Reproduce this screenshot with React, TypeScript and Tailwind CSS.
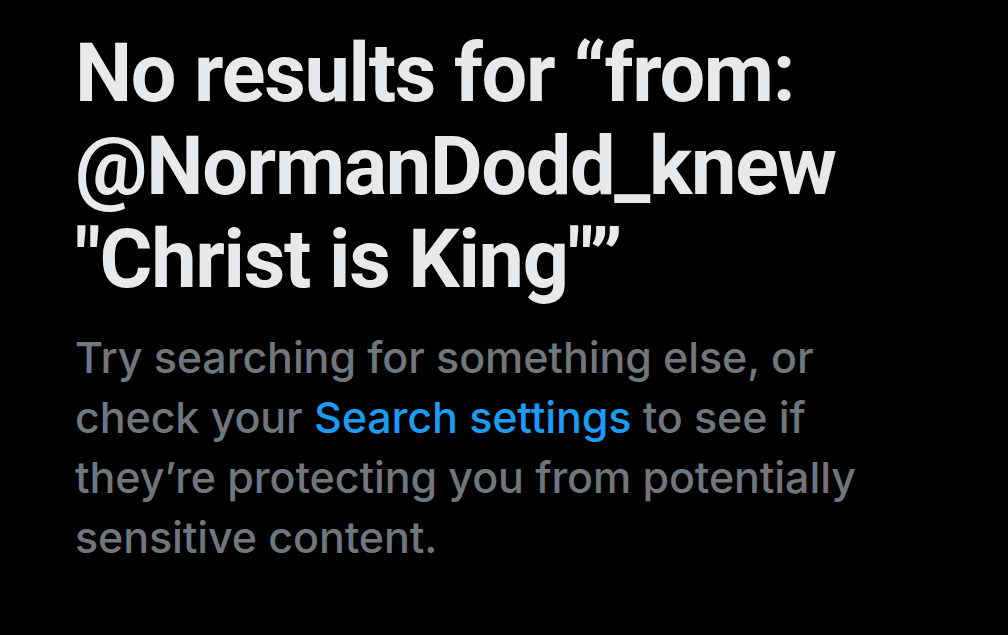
export default function App() {
  return (
    <div className="min-h-screen w-full bg-black">
      <div className="pl-[75px] pt-[27px] w-[940px]" style={{ fontFamily: "Inter, 'Noto Sans', sans-serif" }}>
        {/* heading */}
        <h1 className="text-[#e7e9ea] text-[81px] leading-[93px] font-bold tracking-[-1.3px] font-[Roboto,sans-serif]">
          No results for “from:
          <br />
          @NormanDodd_knew
          <br />
          "Christ is King"”
        </h1>
        {/* hint */}
        <p className="mt-[21px] text-[#71767b] text-[43px] leading-[60px] font-medium tracking-[-0.1px]">
          Try searching for something else, or
          <br />
          check your <span className="text-[#1d9bf0]">Search settings</span> to see if
          <br />
          they’re protecting you from potentially
          <br />
          sensitive content.
        </p>
      </div>
    </div>
  );
}
